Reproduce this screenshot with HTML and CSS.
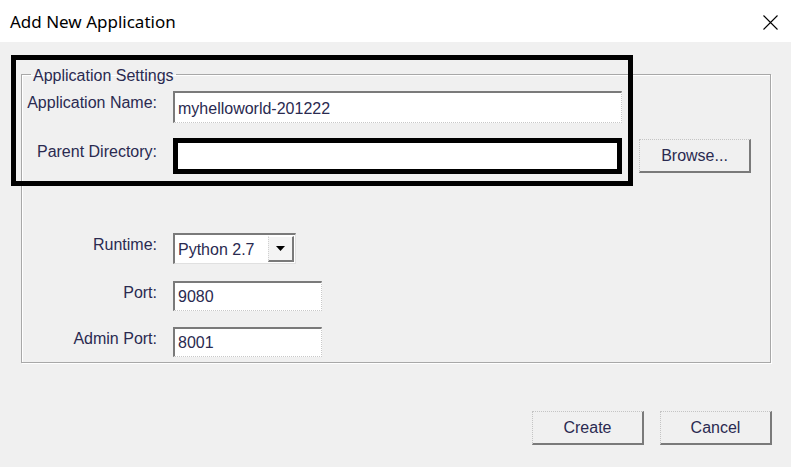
FILE: index.html
```html
<!DOCTYPE html>
<html>
<head>
<meta charset="utf-8">
<link rel="stylesheet" href="styles.css">
</head>
<body>
<div class="dialog">
  <div class="titlebar">
    <span class="title">Add New Application</span>
    <svg class="close" width="15" height="15" viewBox="0 0 15 15"><path d="M0.5 0.5 L14.5 14.5 M14.5 0.5 L0.5 14.5" stroke="#000" stroke-width="1.1" fill="none"/></svg>
  </div>
  <div class="content">
    <fieldset class="group">
      <legend class="legend">Application Settings</legend>
      <div class="row row-name">
        <label class="label">Application Name:</label>
        <div class="field field-wide">myhelloworld-201222</div>
      </div>
      <div class="row row-parent">
        <label class="label label-low">Parent Directory:</label>
        <div class="field field-marked"></div>
        <div class="button button-browse">Browse...</div>
      </div>
      <div class="row row-runtime">
        <label class="label">Runtime:</label>
        <div class="select">
          <span class="select-text">Python 2.7</span>
          <span class="select-btn"><svg width="9" height="5" viewBox="0 0 9 5"><path d="M0 0 H9 L4.5 5 Z" fill="#000"/></svg></span>
        </div>
      </div>
      <div class="row row-port">
        <label class="label">Port:</label>
        <div class="field field-short">9080</div>
      </div>
      <div class="row row-admin">
        <label class="label">Admin Port:</label>
        <div class="field field-short">8001</div>
      </div>
    </fieldset>
    <div class="footer">
      <div class="button">Create</div>
      <div class="button">Cancel</div>
    </div>
    <div class="annotation"></div>
  </div>
</div>
</body>
</html>
```

FILE: styles.css
```css
html, body {
  margin: 0;
  padding: 0;
  background: #f0f0f0;
}
.dialog {
  width: 791px;
  height: 467px;
  display: flex;
  flex-direction: column;
  font-family: "Liberation Sans", Arial, sans-serif;
  font-size: 16px;
  color: #2a2a50;
}
.titlebar {
  height: 42px;
  background: #fff;
  display: flex;
  align-items: center;
  justify-content: space-between;
  padding: 0 13px 0 10px;
  flex-shrink: 0;
}
.title {
  font-family: "Noto Sans", sans-serif;
  font-size: 17px;
  color: #000;
}
.close {
  display: block;
  margin-top: 2px;
}
.content {
  position: relative;
  flex: 1;
  background: #f0f0f0;
  padding: 0 0 0 21px;
}
.group {
  margin: 22px 0 0 0;
  padding: 6px 0 5px 0;
  width: 750px;
  box-sizing: border-box;
  border: 1px solid #a8a8a8;
  box-shadow: inset 1px 1px 0 #fff, 1px 1px 0 #fff;
  min-width: 0;
}
.legend {
  margin-left: 9px;
  padding: 3px 2px 0 2px;
  line-height: 18px;
}
.row {
  display: flex;
  align-items: flex-start;
}
.label {
  width: 135px;
  text-align: right;
  padding-top: 3px;
  line-height: 18px;
  margin-right: 16px;
  flex-shrink: 0;
}
.label-low {
  padding-top: 5px;
}
.row-parent { margin-top: 15px; }
.row-runtime { margin-top: 59px; }
.row-port { margin-top: 17px; }
.row-admin { margin-top: 16px; }

.field {
  box-sizing: border-box;
  background: #fff;
  border-top: 2px solid #7a7a7a;
  border-left: 2px solid #7a7a7a;
  border-right: 1px dotted #c8c8c8;
  border-bottom: 1px dotted #c8c8c8;
  padding-left: 3px;
  display: flex;
  align-items: center;
  color: #2a2a50;
}
.field-wide {
  width: 449px;
  height: 32px;
  padding-top: 2px;
}
.field-marked {
  width: 449px;
  height: 36px;
  border: 5px solid #000;
}
.field-short {
  width: 149px;
  height: 30px;
  padding-top: 1px;
}
.select {
  box-sizing: border-box;
  width: 123px;
  height: 31px;
  background: #fff;
  border-top: 2px solid #7a7a7a;
  border-left: 2px solid #7a7a7a;
  border-right: 1px solid #e0e0e0;
  border-bottom: 1px solid #e0e0e0;
  display: flex;
  align-items: stretch;
}
.select-text {
  flex: 1;
  display: flex;
  align-items: center;
  padding-left: 3px;
  padding-top: 1px;
  font-size: 16px;
}
.select-btn {
  width: 26px;
  box-sizing: border-box;
  border-top: 1px solid #fff;
  border-left: 1px dotted #d0d0d0;
  border-right: 2px solid #7a7a7a;
  border-bottom: 2px solid #7a7a7a;
  background: #f4f4f4;
  display: flex;
  align-items: center;
  justify-content: center;
  margin: 1px 1px 1px 0;
}
.select-btn svg { display: block; }

.button {
  box-sizing: border-box;
  width: 112px;
  height: 34px;
  background: #f0f0f0;
  border-top: 1px dotted #c4c4c4;
  border-left: 1px dotted #c4c4c4;
  border-right: 2px solid #7a7a7a;
  border-bottom: 2px solid #7a7a7a;
  display: flex;
  align-items: center;
  justify-content: center;
  padding-top: 1px;
  color: #2a2a50;
}
.button-browse {
  margin-left: 17px;
  margin-top: 1px;
}
.footer {
  display: flex;
  justify-content: flex-end;
  gap: 16px;
  margin-top: 48px;
  padding-right: 19px;
}
.annotation {
  position: absolute;
  left: 11px;
  top: 13px;
  width: 622px;
  height: 131px;
  box-sizing: border-box;
  border: 5px solid #000;
  pointer-events: none;
}
```
